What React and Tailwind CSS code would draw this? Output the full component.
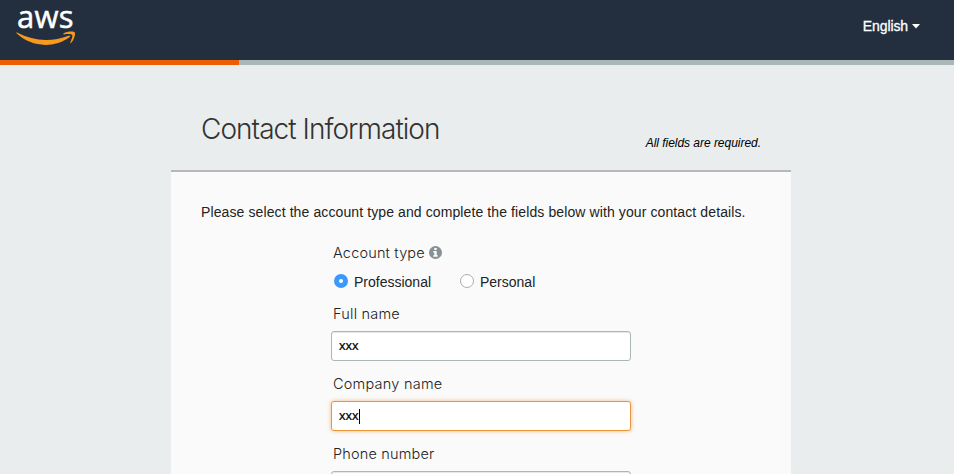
function AwsLogo() {
  return (
    <div className="relative ml-4 h-[60px] w-[64px] text-white">
      <span className="absolute left-[1px] top-0 font-['Open_Sans',sans-serif] text-[31px] leading-[32px] tracking-[0.200px] [-webkit-text-stroke:0.5px_white]">aws</span>
      <svg className="absolute left-0 top-[30px]" width="61" height="17" viewBox="0 0 61 17" fill="#f7981f">
        <path d="M.3 3.100C-.1 2.800.4 2.300 1 2.600 18 11.700 36 12.100 52.600 5.700 53.800 5.200 54.600 6.400 53.500 7.200 38 18.500 15 17.500 .3 3.100Z" />
        <path d="M47.500 3.500C50.500 1.500 57.500 1 58.700 2.300 59.800 3.800 58 10.500 55 13 54.500 13.400 54 13.200 54.300 12.600 55.200 10.400 57 6.100 56.200 4.900 55.200 3.600 50.600 4.100 48 4.400 47.400 4.500 47 3.900 47.500 3.500Z" />
      </svg>
    </div>
  );
}

function InfoIcon() {
  return (
    <svg width="13" height="13" viewBox="0 0 13 13" className="relative -top-px ml-1">
      <circle cx="6.500" cy="6.500" r="6.500" fill="#879196" />
      <path d="M5.300 2h2.400v2H5.300zM4.300 5h3.400v4.300h1v1.500H4.300V9.300h1V6.400h-1z" fill="#fff" />
    </svg>
  );
}

function Label({ children, tracking }) {
  return (
    <div className={`ml-[2px] flex h-5 items-center whitespace-nowrap font-['Inter',sans-serif] text-[14.500px] font-light leading-5 text-[#222] ${tracking}`}>
      {children}
    </div>
  );
}

function Field({ label, tracking, value, focused }) {
  return (
    <div className="mb-[13px]">
      <Label tracking={tracking}>{label}</Label>
      <div
        className={`mt-[7px] flex h-[30px] w-[300px] items-center rounded-[3px] border bg-white px-[7px] text-[13px] text-black ${
          focused ? "border-[#eb9439] shadow-[0_0_4px_rgba(235,148,57,0.6)]" : "border-[#aab7b8] shadow-[inset_0_1px_1px_rgba(0,0,0,0.1)]"
        }`}
      >
        <span className="[-webkit-text-stroke:0.2px_black]">{value}</span>
        {focused && <span className="h-[15px] w-px bg-black" />}
      </div>
    </div>
  );
}

export default function App() {
  return (
    <div className="h-[474px] w-[954px] overflow-hidden bg-[#e9eded] font-['Liberation_Sans',Arial,sans-serif] text-[#222]">
      <header className="flex h-[60px] justify-between bg-[#232f3e]">
        <AwsLogo />
        <div className="mr-[34px] mt-[16px] flex h-5 items-center text-[14px] text-white">
          <span className="tracking-[-0.100px] [-webkit-text-stroke:0.3px_white]">English</span>
          <svg width="8" height="5" viewBox="0 0 8 5" className="ml-1"><path d="M0 0h8L4 4.500z" fill="#fff" /></svg>
        </div>
      </header>
      <div className="h-[5px] bg-[#aab7b8]"><div className="h-full w-[239px] bg-[#eb5f07]" /></div>
      <main className="ml-[171px] w-[620px]">
        <div className="flex h-[105px] justify-between px-[30px]">
          <h1 className="mt-[44px] h-10 whitespace-nowrap font-['Inter',sans-serif] text-[28px] font-light leading-10 tracking-[-0.960px] text-[#333]">Contact Information</h1>
          <p className="mt-[68px] text-[12px] italic leading-5 tracking-[-0.030px] text-black">All fields are required.</p>
        </div>
        <section className="h-[304px] border-t-2 border-[#b7b7b7] bg-[#fafafa]">
          <p className="ml-[30px] pt-[30px] whitespace-nowrap text-[14px] leading-5 tracking-[0.105px]">Please select the account type and complete the fields below with your contact details.</p>
          <div className="ml-[160px] mt-[21px]">
            <Label tracking="tracking-[0.170px]">Account type<InfoIcon /></Label>
            <div className="mt-[9px] flex h-5 items-center pl-[3px] text-[14px]">
              <span className="relative -top-px flex size-[14px] items-center justify-center rounded-full bg-[#3b99fc]"><span className="size-1 rounded-full bg-white" /></span>
              <span className="ml-[6px] w-[106px]">Professional</span>
              <span className="relative -top-px size-[14px] rounded-full border border-[#adadad] bg-white" />
              <span className="ml-[6px]">Personal</span>
            </div>
            <div className="mt-3">
              <Field label="Full name" tracking="tracking-[0.220px]" value="xxx" />
              <Field label="Company name" tracking="tracking-[0.230px]" value="xxx" focused />
              <Field label="Phone number" tracking="tracking-[0.170px]" value="" />
            </div>
          </div>
        </section>
      </main>
    </div>
  );
}
